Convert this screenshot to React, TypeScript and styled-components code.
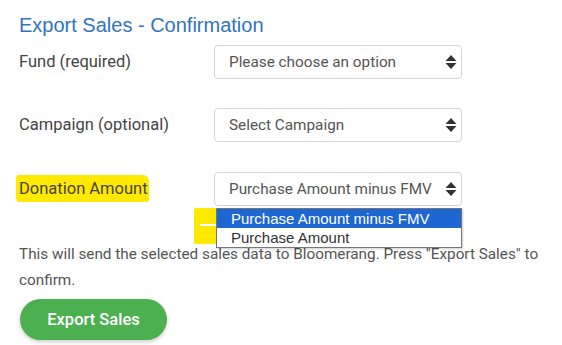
import React from 'react';
import styled, { createGlobalStyle } from 'styled-components';

const GlobalStyle = createGlobalStyle`
    body {
        margin: 0;
        background: #fff;
        font-family: Roboto, "Liberation Sans", sans-serif;
    }
`;

const Page = styled.div`
    padding: 13px 19px 0 19px;
    width: 562px;
    height: 345px;
    box-sizing: border-box;
    overflow: hidden;
`;

const Title = styled.h2`
    margin: 0 0 8px 0;
    font-family: "Liberation Sans", Arial, sans-serif;
    font-weight: normal;
    font-size: 20px;
    line-height: 24px;
    color: #3373c1;
`;

const FormRow = styled.div<{ $gap?: number }>`
    display: flex;
    align-items: center;
    margin-bottom: ${p => p.$gap ?? 30}px;
    position: relative;
`;

const Label = styled.div`
    width: 195px;
    font-size: 16.5px;
    color: #444;
    margin-top: -1px;
`;

const Highlight = styled.span`
    background: #ffe900;
    padding: 4px 1px 4px 3px;
    margin-left: -3px;
    border-radius: 3px 6px 2px 4px;
`;

const SelectBox = styled.div`
    width: 248px;
    height: 34px;
    box-sizing: border-box;
    border: 1px solid #d4d4d4;
    border-radius: 4px;
    display: flex;
    align-items: center;
    justify-content: space-between;
    padding: 0 3px 0 14px;
    font-size: 15.3px;
    color: #555;
    white-space: nowrap;
    overflow: hidden;
`;

const SelectText = styled.span`
    overflow: hidden;
    flex: 1;
    margin-right: 5px;
`;

const Carets = () => (
    <svg width="14" height="16" viewBox="0 0 14 16">
        <path d="M7 1 L12.5 7 L1.5 7 Z" fill="#333" />
        <path d="M7 15 L12.5 9 L1.5 9 Z" fill="#333" />
    </svg>
);

const Marker = styled.div`
    position: absolute;
    left: 175px;
    top: 36px;
    width: 26px;
    height: 36px;
    background: #ffe900;
    border-radius: 2px;
    &::after {
        content: '';
        position: absolute;
        left: 6px;
        top: 16px;
        width: 18px;
        height: 2px;
        background: #fff;
    }
`;

const OptionList = styled.div`
    position: absolute;
    left: 197px;
    top: 36px;
    width: 246px;
    box-sizing: border-box;
    border: 1px solid #777;
    background: #fff;
    font-family: "Liberation Sans", Arial, sans-serif;
    font-size: 15px;
    box-shadow: 1px 1px 2px rgba(0, 0, 0, 0.2);
`;

const Option = styled.div<{ $active?: boolean }>`
    height: 19px;
    line-height: 19px;
    padding-left: 14px;
    color: ${p => (p.$active ? '#fff' : '#333')};
    background: ${p => (p.$active ? '#1e67d2' : 'transparent')};
`;

const Note = styled.p`
    margin: 0 0 6px 0;
    font-size: 15.3px;
    line-height: 26px;
    color: #555;
`;

const ExportButton = styled.button`
    margin-left: 1px;
    width: 147px;
    height: 41px;
    border: none;
    border-radius: 21px;
    background: #4caf50;
    color: #fff;
    font-family: Roboto, sans-serif;
    font-size: 16.5px;
    font-weight: 500;
    box-shadow: 0 2px 4px rgba(0, 0, 0, 0.2);
`;

export default function App() {
    return (
        <Page>
            <GlobalStyle />
            <Title>Export Sales - Confirmation</Title>
            <FormRow $gap={29}>
                <Label>Fund (required)</Label>
                <SelectBox>
                    <SelectText>Please choose an option</SelectText>
                    <Carets />
                </SelectBox>
            </FormRow>
            <FormRow>
                <Label>Campaign (optional)</Label>
                <SelectBox>
                    <SelectText>Select Campaign</SelectText>
                    <Carets />
                </SelectBox>
            </FormRow>
            <FormRow $gap={35}>
                <Label><Highlight>Donation Amount</Highlight></Label>
                <SelectBox>
                    <SelectText>Purchase Amount minus FMV</SelectText>
                    <Carets />
                </SelectBox>
                <Marker />
                <OptionList>
                    <Option $active>Purchase Amount minus FMV</Option>
                    <Option>Purchase Amount</Option>
                </OptionList>
            </FormRow>
            <Note>This will send the selected sales data to Bloomerang. Press "Export Sales" to confirm.</Note>
            <ExportButton>Export Sales</ExportButton>
        </Page>
    );
}
